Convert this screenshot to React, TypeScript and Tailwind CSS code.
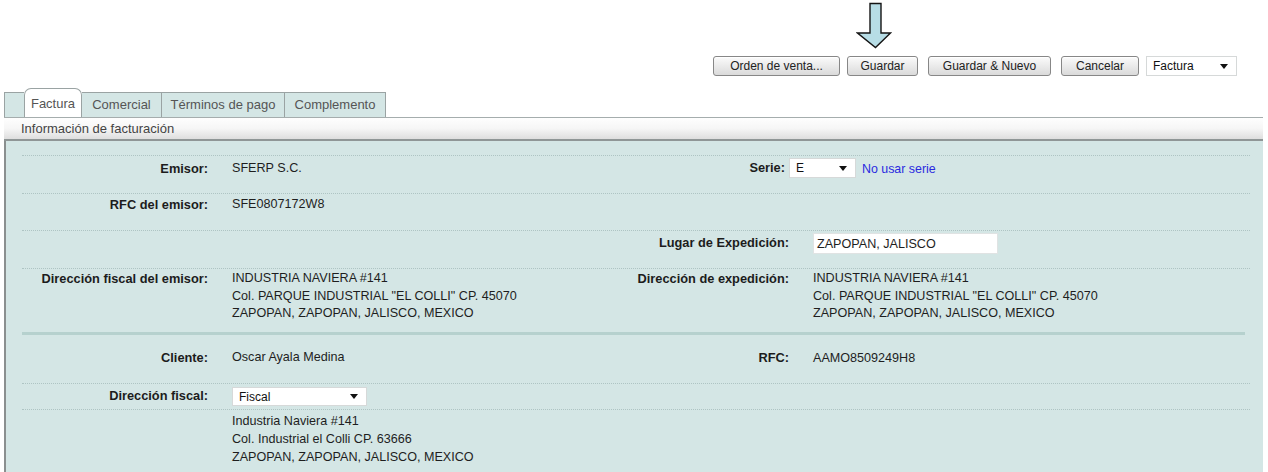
import React from 'react';

const font = "font-['Liberation_Sans',Arial,sans-serif]";

const Caret = () => (
  <svg width="8" height="5" viewBox="0 0 8 5" className="shrink-0">
    <polygon points="0,0 8,0 4,5" fill="#111" />
  </svg>
);

const Select = ({ value, className }: { value: string; className: string }) => (
  <div className={`flex items-center justify-between border border-[#d6d9d9] bg-white pl-[6px] pr-[8px] text-[12px] text-[#111] ${className}`}>
    <span>{value}</span>
    <Caret />
  </div>
);

const Button = ({ label, className }: { label: string; className: string }) => (
  <button
    className={`h-[20px] rounded-[3px] border border-[#878787] bg-gradient-to-b from-[#fbfbfb] to-[#dadada] text-[12px] text-[#222] shadow-[inset_0_1px_0_#fff] ${className}`}
  >
    {label}
  </button>
);

const Label = ({ children, className = '' }: { children: React.ReactNode; className?: string }) => (
  <div className={`pr-[24px] text-right text-[12.8px] font-bold leading-[15px] text-[#1c1c1c] ${className}`}>{children}</div>
);

const Value = ({ children, className = '' }: { children: React.ReactNode; className?: string }) => (
  <div className={`text-[12.6px] leading-[15px] text-[#1e1e1e] ${className}`}>{children}</div>
);

const Address = ({ lines, leading }: { lines: string[]; leading: string }) => (
  <div className={`text-[12.6px] text-[#1e1e1e] ${leading}`}>
    {lines.map((l) => (
      <div key={l}>{l}</div>
    ))}
  </div>
);

const row = 'grid grid-cols-[210px_378px_203px_1fr]';
const dotted = 'border-t border-dotted border-[#aec4c3]';

const tabs = ['Comercial', 'Términos de pago', 'Complemento'];
const tabWidths = ['w-[80px]', 'w-[123px]', 'w-[101px]'];

const emisorAddress = ['INDUSTRIA NAVIERA #141', 'Col. PARQUE INDUSTRIAL "EL COLLI" CP. 45070', 'ZAPOPAN, ZAPOPAN, JALISCO, MEXICO'];

export default function App() {
  return (
    <div className={`h-[472px] w-[1268px] overflow-hidden bg-white ${font}`}>
      {/* pointer arrow above the save button */}
      <div className="h-[56px] pl-[856px] pt-[2px]">
        <svg width="36" height="47" viewBox="0 0 36 47">
          <path d="M14 1.5 H25 V31 H34.5 L19.5 45.5 L1.5 31 H14 Z" fill="#b7dde6" stroke="#141414" strokeWidth="1.4" strokeLinejoin="miter" />
        </svg>
      </div>

      {/* toolbar */}
      <div className="flex h-[32px] items-start pl-[713px]">
        <Button label="Orden de venta..." className="w-[127px]" />
        <Button label="Guardar" className="ml-[7px] w-[71px]" />
        <Button label="Guardar & Nuevo" className="ml-[10px] w-[123px]" />
        <Button label="Cancelar" className="ml-[10px] w-[78px]" />
        <Select value="Factura" className="ml-[7px] h-[20px] w-[91px]" />
      </div>

      <div className="ml-[4px] w-[1259px]">
        {/* tabs */}
        <div className="flex h-[29px] items-end">
          <div className="h-[25px] w-[20px] border-l border-t border-[#9aa3a3] bg-[#d4e6e5]" />
          <div className="flex h-[29px] w-[58px] items-center justify-center rounded-t-[7px] border border-b-0 border-[#9aa3a3] bg-white pt-[2px] text-[13px] text-[#555]">
            Factura
          </div>
          {tabs.map((t, i) => (
            <div
              key={t}
              className={`flex h-[25px] items-center justify-center border-r border-t border-[#9aa3a3] bg-[#d4e6e5] text-[13px] text-[#555] ${tabWidths[i]}`}
            >
              {t}
            </div>
          ))}
        </div>

        {/* section header */}
        <div className="flex h-[24px] items-center border-t border-b-2 border-t-[#a5adad] border-b-[#8f9696] bg-gradient-to-b from-[#fefefe] via-[#f6f6f6] to-[#dedede] pl-[17px] text-[13px] text-[#444]">
          Información de facturación
        </div>

        {/* form panel */}
        <div className="h-[331px] border-l-2 border-[#8a8f8f] bg-[#d4e6e5] pl-[16px] pr-[13px] pt-[14px]">
          <div className={`${row} ${dotted} h-[38px]`}>
            <Label className="pt-[5px]">Emisor:</Label>
            <Value className="pt-[5px]">SFERP S.C.</Value>
            <div className="col-span-2 flex items-start pt-[2px]">
              <div className="w-[175px] pt-[2px] text-right text-[12.8px] font-bold leading-[15px] text-[#1c1c1c]">Serie:</div>
              <Select value="E" className="ml-[4px] h-[20px] w-[67px]" />
              <span className="ml-[6px] pt-[4px] text-[12.4px] leading-[15px] text-[#2a2ae0]">No usar serie</span>
            </div>
          </div>

          <div className={`${row} ${dotted} h-[37px]`}>
            <Label className="pt-[3px]">RFC del emisor:</Label>
            <Value className="pt-[3px]">SFE0807172W8</Value>
          </div>

          <div className={`${row} ${dotted} h-[38px]`}>
            <div />
            <div />
            <Label className="pt-[4px]">Lugar de Expedición:</Label>
            <div className="pt-[2px]">
              <div className="flex h-[21px] w-[185px] items-center border border-[#e0e3e3] bg-white pl-[3px] pt-[2px] text-[12.6px] text-[#1e1e1e]">
                ZAPOPAN, JALISCO
              </div>
            </div>
          </div>

          <div className={`${row} ${dotted} h-[64px]`}>
            <Label className="pt-[2px]">Dirección fiscal del emisor:</Label>
            <Address leading="leading-[17.5px] pt-[1px]" lines={emisorAddress} />
            <Label className="pt-[2px]">Dirección de expedición:</Label>
            <Address leading="leading-[17.5px] pt-[1px]" lines={emisorAddress} />
          </div>

          {/* client block divider */}
          <div className="mr-[5px] h-[3px] bg-[#b6d1ce]" />

          <div className={`${row} h-[48px]`}>
            <Label className="pt-[15px]">Cliente:</Label>
            <Value className="pt-[15px]">Oscar Ayala Medina</Value>
            <Label className="pt-[15px]">RFC:</Label>
            <Value className="pt-[16px]">AAMO8509249H8</Value>
          </div>

          <div className={`${row} ${dotted} h-[26px]`}>
            <Label className="pt-[4px]">Dirección fiscal:</Label>
            <div className="pt-[3px]">
              <Select value="Fiscal" className="h-[19px] w-[135px]" />
            </div>
          </div>

          <div className={`${row} ${dotted}`}>
            <div />
            <Address
              leading="leading-[18px] pt-[2px]"
              lines={['Industria Naviera #141', 'Col. Industrial el Colli CP. 63666', 'ZAPOPAN, ZAPOPAN, JALISCO, MEXICO']}
            />
          </div>
        </div>
      </div>
    </div>
  );
}
